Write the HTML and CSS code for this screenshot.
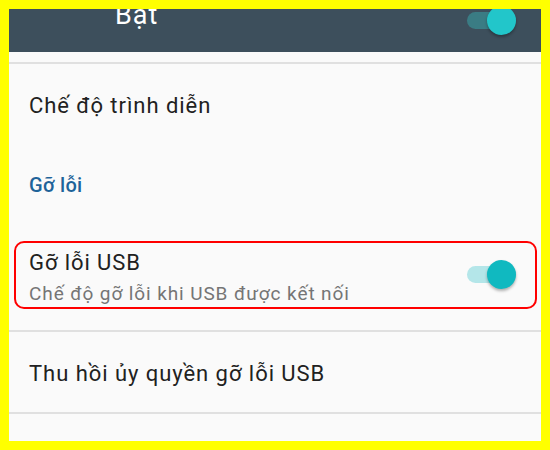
FILE: index.html
```html
<!DOCTYPE html>
<html lang="vi">
<head>
<meta charset="utf-8">
<link rel="stylesheet" href="styles.css">
</head>
<body>
<div class="frame">
  <div class="screen">
    <div class="header">
      <div class="header-title">Bạt</div>
      <div class="switch switch-dark"><span class="track"></span><span class="thumb"></span></div>
    </div>
    <div class="divider first"></div>
    <div class="item item-first">Chế độ trình diễn</div>
    <div class="category">Gỡ lỗi</div>
    <div class="highlight">
      <div class="texts">
        <div class="title">Gỡ lỗi USB</div>
        <div class="summary">Chế độ gỡ lỗi khi USB được kết nối</div>
      </div>
      <div class="switch switch-light"><span class="track"></span><span class="thumb"></span></div>
    </div>
    <div class="divider after-box"></div>
    <div class="item item-revoke">Thu hồi ủy quyền gỡ lỗi USB</div>
    <div class="divider last"></div>
  </div>
</div>
</body>
</html>
```
FILE: styles.css
```css
html, body {
  margin: 0;
  padding: 0;
  background: #ffff00;
}
.frame {
  width: 550px;
  height: 450px;
  padding: 9px;
  box-sizing: border-box;
  background: #ffff00;
}
.screen {
  width: 532px;
  height: 432px;
  overflow: hidden;
  background: #fafafa;
  font-family: Roboto, "Noto Sans", sans-serif;
}
.header {
  height: 43px;
  background: #3d4f5c;
  display: flex;
  justify-content: space-between;
  align-items: flex-start;
  padding: 0 25px 0 106px;
  box-sizing: border-box;
  overflow: hidden;
}
.header-title {
  color: #ffffff;
  font-size: 27px;
  line-height: 28px;
  letter-spacing: 1px;
  margin-top: -8px;
}
.switch {
  position: relative;
  width: 49px;
  height: 29px;
  flex: none;
}
.switch .track {
  position: absolute;
  left: 0;
  top: 6px;
  width: 49px;
  height: 17px;
  border-radius: 9px;
}
.switch .thumb {
  position: absolute;
  right: 0;
  top: 0;
  width: 29px;
  height: 29px;
  border-radius: 50%;
  box-shadow: 0 2px 3px rgba(0, 0, 0, 0.3);
}
.switch-dark {
  margin-top: -3px;
}
.switch-dark .track { background: #3a7c84; }
.switch-dark .thumb { background: #22c6ca; }
.switch-light .track { background: #b4e6e9; }
.switch-light .thumb { background: #10b9c0; }
.divider {
  height: 2px;
  background: #e0e0e0;
}
.divider.first { margin-top: 10px; }
.item {
  color: #212121;
  font-size: 22px;
  line-height: 24px;
  letter-spacing: 0.95px;
  padding-left: 20px;
}
.item-first { margin-top: 30px; }
.category {
  margin-top: 56px;
  padding-left: 20px;
  color: #1e6399;
  font-size: 20px;
  line-height: 22px;
  letter-spacing: 0.3px;
  font-weight: 500;
}
.highlight {
  margin: 45px 4px 0 5px;
  height: 68px;
  box-sizing: border-box;
  border: 2px solid #ff0000;
  border-radius: 10px;
  padding: 8px 19px 2px 13px;
  display: flex;
  align-items: center;
  justify-content: space-between;
}
.texts {
  align-self: flex-start;
}
.title {
  color: #212121;
  font-size: 22px;
  line-height: 24px;
  letter-spacing: 0.9px;
}
.summary {
  margin-top: 8px;
  color: #757575;
  font-size: 19px;
  line-height: 22px;
  letter-spacing: 0.9px;
}
.highlight .switch {
  margin-top: -8px;
}
.divider.after-box { margin-top: 21px; }
.item-revoke { margin-top: 30px; }
.divider.last { margin-top: 26px; }
```
